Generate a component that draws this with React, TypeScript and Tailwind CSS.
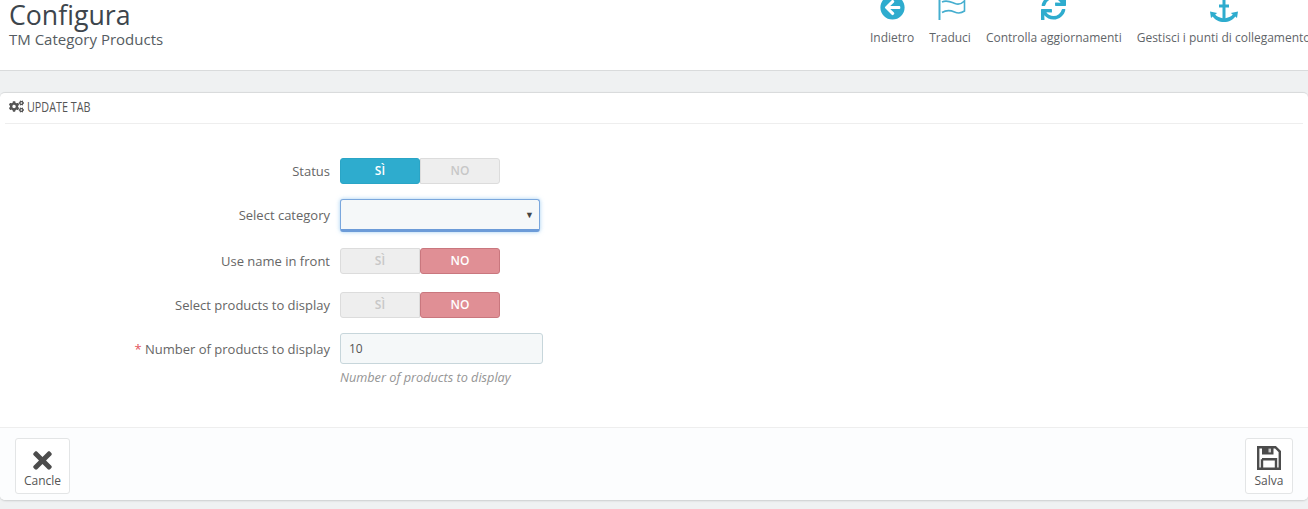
import { FaArrowCircleLeft, FaCogs, FaSync, FaTimes } from 'react-icons/fa'

const FlagIcon = () => (
  <svg width="28" height="22" viewBox="0 0 28 22" fill="none" stroke="#45aecf" className="ml-[3px] block">
    <path d="M1.5 0V20" strokeWidth="2" />
    <path d="M4 2C9 -0.5 13 2 17 3.5S24 3.5 26.5 1M26.5 0V11C23 13.5 20 13.5 16.5 12S9 9.5 4 12.5" strokeWidth="1.6" />
  </svg>
)

const AnchorIcon = () => (
  <svg width="28" height="22" viewBox="0 0 28 22" fill="#2eacce" className="block">
    <path d="M12.5 0H15.5V4.5H19V7.5H15.5V18.2C18.8 17.8 21.6 16.3 22.8 14.6L20.8 13L28 11.5L27 18L25.2 16.4C23.2 19.6 18.8 22 14 22C9.2 22 4.8 19.6 2.8 16.4L1 18L0 11.5L7.2 13L5.2 14.6C6.4 16.3 9.2 17.8 12.5 18.2V7.5H9V4.5H12.5Z" />
  </svg>
)

const SaveIcon = () => (
  <svg width="24" height="24" viewBox="0 0 24 24" fill="none" stroke="#4c4c4c" strokeWidth="2.4" className="block">
    <path d="M1.2 1.2H18.4L22.8 5.6V22.8H1.2Z" />
    <path d="M5 13.2H19V22.8M5 13.2V22.8" />
    <path d="M5 0.5H16.5V8.5H5Z" fill="#4c4c4c" stroke="none" />
    <path d="M11.5 2.6H14V6.4H11.5Z" fill="#c9c9c9" stroke="none" />
  </svg>
)

const toolbar = [
  { label: 'Indietro', icon: <FaArrowCircleLeft className="block text-[25px] text-[#2eacce]" />, pad: 'pb-[10px]' },
  { label: 'Traduci', icon: <FlagIcon />, pad: 'pb-[8px]' },
  { label: 'Controlla aggiornamenti', icon: <FaSync className="block text-[25px] text-[#2eacce]" />, pad: 'pb-[10px]' },
  { label: 'Gestisci i punti di collegamento', icon: <AnchorIcon />, pad: 'pb-[8px]' },
]

const Toggle = ({ on }: { on: boolean }) => (
  <div className="flex h-[26px] w-[160px] text-[12px] font-semibold">
    <div
      className={
        on
          ? 'flex w-[80px] items-center justify-center rounded-[3px] border border-[#2aa5c6] bg-[#2eacce] text-white'
          : 'flex w-[80px] items-center justify-center rounded-l-[3px] border border-[#dcdcdc] bg-[#eeeeee] text-[#c7c7c7]'
      }
    >
      SÌ
    </div>
    <div
      className={
        on
          ? 'flex w-[80px] items-center justify-center rounded-r-[3px] border border-[#dcdcdc] bg-[#eeeeee] text-[#c7c7c7]'
          : 'flex w-[80px] items-center justify-center rounded-[3px] border border-[#c9777e] bg-[#e08f95] text-white'
      }
    >
      NO
    </div>
  </div>
)

const Row = ({ label, required, className, children }: { label: string; required?: boolean; className: string; children: React.ReactNode }) => (
  <div className={`flex items-center ${className}`}>
    <label className={required ? 'w-[330px] shrink-0 pt-[2px] text-right text-[13px] text-[#666666]' : 'w-[330px] shrink-0 pt-[1px] text-right text-[13px] text-[#666666]'}>
      {required && <span className="text-[#e2555c]">* </span>}
      {label}
    </label>
    <div className="ml-[10px]">{children}</div>
  </div>
)

export default function App() {
  return (
    <div className="h-[509px] w-[1308px] overflow-hidden bg-[#eff1f2] font-['Open_Sans',sans-serif] text-[#555555]">
      <header className="flex h-[71px] border-b border-[#d9dbdc] bg-white">
        <div className="w-[870px] shrink-0 pl-[9px]">
          <h1 className="text-[26.7px] leading-[30px] text-[#3d454c]">Configura</h1>
          <p className="text-[15px] leading-[18px] text-[#555c62]">TM Category Products</p>
        </div>
        <div className="flex shrink-0 gap-[15px]">
          {toolbar.map(({ label, icon, pad }) => (
            <div key={label} className="flex flex-col items-center">
              <div className={`flex h-[30px] items-end justify-center overflow-hidden ${pad}`}>{icon}</div>
              <span className="whitespace-nowrap text-[12px] leading-[16px] text-[#5f6569]">{label}</span>
            </div>
          ))}
        </div>
      </header>

      <section className="mt-[21px] flex h-[408px] flex-col rounded-[5px] border-t border-[#d9dbdc] bg-white shadow-[0_1px_2px_rgba(0,0,0,0.15)]">
        <div className="mx-[5px] flex h-[31px] items-center border-b border-[#eeeeee] pb-[3px] pl-[4px] text-[#555555]">
          <FaCogs className="mr-[3px] shrink-0 text-[15px]" />
          <span className="inline-block origin-left scale-x-[0.77] whitespace-nowrap text-[14px]">UPDATE TAB</span>
        </div>

        <div className="flex-1">
          <Row label="Status" className="mt-[34px]">
            <Toggle on />
          </Row>
          <Row label="Select category" className="mt-[15px]">
            <div className="relative h-[33px] w-[200px] rounded-[3px] border border-[#7aa7dd] border-b-[3px] border-b-[#6c9bd8] bg-[#f5f8f9] shadow-[0_0_4px_rgba(102,175,233,0.6)]">
              <span className="absolute right-[5px] top-[8px] text-[9px] text-[#444444]">▼</span>
            </div>
          </Row>
          <Row label="Use name in front" className="mt-[16px]">
            <Toggle on={false} />
          </Row>
          <Row label="Select products to display" className="mt-[18px]">
            <Toggle on={false} />
          </Row>
          <Row label="Number of products to display" required className="mt-[15px]">
            <div className="flex h-[31px] w-[203px] items-center rounded-[3px] border border-[#c7d6db] bg-[#f5f8f9] pl-[8px] pt-[1px] text-[12px] text-[#555555]">10</div>
          </Row>
          <p className="ml-[340px] mt-[4px] text-[12.7px] italic leading-[18px] text-[#959595]">Number of products to display</p>
        </div>

        <footer className="flex h-[73px] items-start justify-between rounded-b-[5px] border-t border-[#eeeeee] bg-[#fcfdfe] px-[15px] pt-[10px]">
          <button className="flex h-[56px] w-[55px] flex-col items-center rounded-[3px] border border-[#e3e5e6] bg-white pt-[8px] text-[12px] text-[#555555]">
            <FaTimes className="text-[27px] text-[#4c4c4c]" />
            <span className="mt-[-2px] leading-[18px]">Cancle</span>
          </button>
          <button className="flex h-[56px] w-[48px] flex-col items-center rounded-[3px] border border-[#e3e5e6] bg-white pt-[7px] text-[12px] text-[#555555]">
            <SaveIcon />
            <span className="mt-[2px] leading-[18px]">Salva</span>
          </button>
        </footer>
      </section>
    </div>
  )
}
